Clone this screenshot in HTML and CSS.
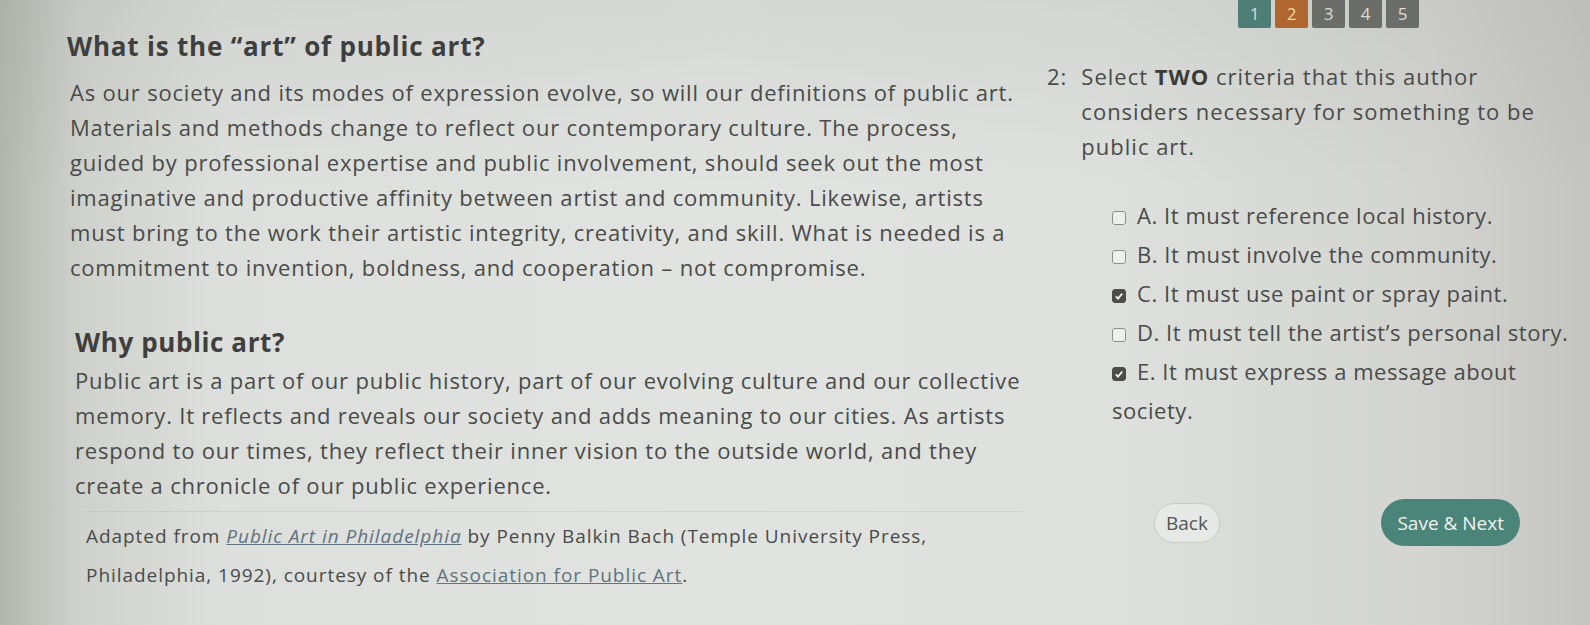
FILE: index.html
```html
<!DOCTYPE html>
<html lang="en">
<head>
  <meta charset="UTF-8">
  <meta name="viewport" content="width=device-width, initial-scale=1.0">
  <title>What is the art of public art?</title>
  <link rel="stylesheet" href="styles.css">
</head>
<body>
  <nav class="pager">
    <span class="pg pg-done">1</span>
    <span class="pg pg-current">2</span>
    <span class="pg">3</span>
    <span class="pg">4</span>
    <span class="pg">5</span>
  </nav>

  <main class="layout">
    <section class="reading">
      <h1>What is the “art” of public art?</h1>
      <p>As our society and its modes of expression evolve, so will our definitions of public art. Materials and methods change to reflect our contemporary culture. The process, guided by professional expertise and public involvement, should seek out the most imaginative and productive affinity between artist and community. Likewise, artists must bring to the work their artistic integrity, creativity, and skill. What is needed is a commitment to invention, boldness, and cooperation – not compromise.</p>

      <h2>Why public art?</h2>
      <p>Public art is a part of our public history, part of our evolving culture and our collective memory. It reflects and reveals our society and adds meaning to our cities. As artists respond to our times, they reflect their inner vision to the outside world, and they create a chronicle of our public experience.</p>

      <p class="credit">Adapted from <a href="#"><em>Public Art in Philadelphia</em></a> by Penny Balkin Bach (Temple University Press, Philadelphia, 1992), courtesy of the <a href="#">Association for Public Art</a>.</p>
    </section>

    <section class="question">
      <div class="prompt">
        <span class="num">2:</span>
        <span>Select <b>TWO</b> criteria that this author considers necessary for something to be public art.</span>
      </div>

      <ul class="options">
        <li><span class="box"></span>A. It must reference local history.</li>
        <li><span class="box"></span>B. It must involve the community.</li>
        <li><span class="box checked"><svg viewBox="0 0 12 12"><path d="M2.8 6.3l2.2 2.3 4.2-5" /></svg></span>C. It must use paint or spray paint.</li>
        <li><span class="box"></span>D. It must tell the artist’s personal story.</li>
        <li><span class="box checked"><svg viewBox="0 0 12 12"><path d="M2.8 6.3l2.2 2.3 4.2-5" /></svg></span>E. It must express a message about society.</li>
      </ul>

      <div class="actions">
        <button class="btn-back">Back</button>
        <button class="btn-next">Save &amp; Next</button>
      </div>
    </section>
  </main>
</body>
</html>
```

FILE: styles.css
```css
body {
  margin: 0;
  width: 1590px;
  height: 625px;
  overflow: hidden;
  font-family: "Open Sans", sans-serif;
  color: #4a4b49;
  background:
    linear-gradient(to bottom, rgba(120, 122, 118, 0.10), rgba(255, 255, 255, 0) 30%),
    linear-gradient(to right, #b3b5af 0%, #cfd2cc 5%, #dcdfdb 14%, #e0e3df 45%, #dde0dc 70%, #d3d4d0 90%, #c4c5c1 100%);
}

.pager {
  display: flex;
  justify-content: flex-end;
  gap: 4px;
  padding-right: 171px;
  margin-top: -4px;
}
.pg {
  width: 33px;
  height: 32px;
  display: flex;
  align-items: center;
  justify-content: center;
  padding-top: 2px;
  box-sizing: border-box;
  background: #6b6e68;
  color: #d9dcd6;
  font-size: 17px;
  border-radius: 2px;
}
.pg-done {
  background: #4f7e76;
}
.pg-current {
  background: #b0662f;
  color: #f1d9a8;
}

.layout {
  display: grid;
  grid-template-columns: 953px 1fr;
  column-gap: 24px;
  padding: 0 12px 0 70px;
}

h1, h2 {
  margin: 0;
  font-size: 26px;
  line-height: 32px;
  font-weight: 700;
  color: #3f403e;
}
h1 {
  margin-top: 2px;
  margin-left: -3px;
  letter-spacing: 0.8px;
}
h2 {
  margin-top: 41px;
  margin-left: 5px;
  letter-spacing: 0.6px;
}

.reading p {
  margin: 0;
  font-size: 22px;
  line-height: 35px;
  letter-spacing: 0.8px;
}
.reading h1 + p {
  margin-top: 13px;
}
.reading h2 + p {
  margin-top: 5px;
  margin-left: 5px;
}

.reading p.credit {
  margin: 8px 0 0 16px;
  padding-top: 5px;
  border-top: 1px solid rgba(160, 165, 160, 0.22);
  font-size: 19px;
  line-height: 39px;
  letter-spacing: 0.95px;
}
.credit a {
  color: #5f7381;
}

.question {
  padding-top: 31px;
  font-size: 22px;
}
.prompt {
  display: flex;
  gap: 14px;
  line-height: 35px;
  letter-spacing: 1px;
}
.prompt b {
  color: #3a3b39;
}

.options {
  list-style: none;
  margin: 32px 0 0 65px;
  padding: 0;
  line-height: 39px;
  letter-spacing: 0.55px;
}
.box {
  display: inline-block;
  width: 14px;
  height: 14px;
  margin-right: 11px;
  vertical-align: -1px;
  border: 1px solid #8d8f8b;
  border-radius: 3px;
  background: #eef0ed;
  box-sizing: border-box;
}
.box.checked {
  background: #4c4d4b;
  border-color: #4c4d4b;
}
.box svg {
  display: block;
  width: 12px;
  height: 12px;
  fill: none;
  stroke: #f0f0ee;
  stroke-width: 1.8;
}

.actions {
  display: flex;
  justify-content: space-between;
  align-items: center;
  margin-top: 69px;
  padding: 0 58px 0 107px;
}
button {
  font-family: "Open Sans", sans-serif;
  font-size: 19px;
  border-radius: 24px;
  cursor: pointer;
}
.btn-back {
  height: 40px;
  padding: 0 11px;
  background: #e6e9e5;
  color: #555654;
  border: 1px solid #c7cac5;
}
.btn-next {
  height: 47px;
  padding: 0 16px;
  background: #4b8479;
  color: #eef3ef;
  border: none;
}
```
